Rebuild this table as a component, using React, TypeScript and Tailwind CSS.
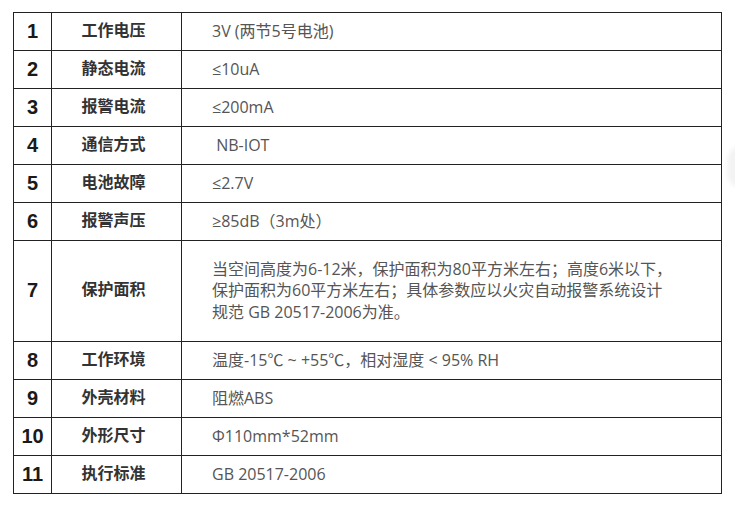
import React from "react";

const rows: { n: string; label: string; value: React.ReactNode; tall?: boolean }[] = [
  { n: "1", label: "工作电压", value: "3V (两节5号电池)" },
  { n: "2", label: "静态电流", value: "≤10uA" },
  { n: "3", label: "报警电流", value: "≤200mA" },
  { n: "4", label: "通信方式", value: "\u00a0NB-IOT" },
  { n: "5", label: "电池故障", value: "≤2.7V" },
  { n: "6", label: "报警声压", value: "≥85dB（3m处）" },
  {
    n: "7",
    label: "保护面积",
    tall: true,
    value: (
      <>
        当空间高度为6-12米，保护面积为80平方米左右；高度6米以下，
        <br />
        保护面积为60平方米左右；具体参数应以火灾自动报警系统设计
        <br />
        规范 GB 20517-2006为准。
      </>
    ),
  },
  { n: "8", label: "工作环境", value: "温度-15℃ ~ +55℃，相对湿度 < 95% RH" },
  { n: "9", label: "外壳材料", value: "阻燃ABS" },
  { n: "10", label: "外形尺寸", value: "Φ110mm*52mm" },
  { n: "11", label: "执行标准", value: "GB 20517-2006" },
];

export default function App() {
  return (
    <div className="relative w-[735px] h-[506px] bg-white overflow-hidden pt-[12px] pl-[13px]">
      <div className="absolute right-[-22px] top-[146px] w-[30px] h-[42px] rounded-full bg-[#f3f3f3] blur-[2px]" />
      <table
        className="relative border-collapse table-fixed w-[708px]"
        style={{ fontFamily: '"Open Sans", "Noto Sans CJK SC", sans-serif' }}
      >
        <colgroup>
          <col className="w-[38px]" />
          <col className="w-[130px]" />
          <col className="w-[540px]" />
        </colgroup>
        <tbody>
          {rows.map((r) => (
            <tr key={r.n} className={r.tall ? "h-[101px]" : "h-[38px]"}>
              <td
                className="border-[1.5px] border-[#222] text-center align-middle p-0 text-[20px] font-bold text-[#1a1a1a]"
                style={{ fontFamily: '"Liberation Sans", Arial, sans-serif' }}
              >
                <span className="relative top-[-1px]">{r.n}</span>
              </td>
              <td className="border-[1.5px] border-[#222] text-center align-middle p-0 pr-[6px] text-[16px] font-bold text-[#333] leading-none">
                <span className="relative top-[-2px]">{r.label}</span>
              </td>
              <td className="border-[1.5px] border-[#222] align-middle pl-[30px] pr-2 py-0 text-[16px] text-[#555] leading-[21.5px] whitespace-nowrap">
                {r.value}
              </td>
            </tr>
          ))}
        </tbody>
      </table>
    </div>
  );
}
